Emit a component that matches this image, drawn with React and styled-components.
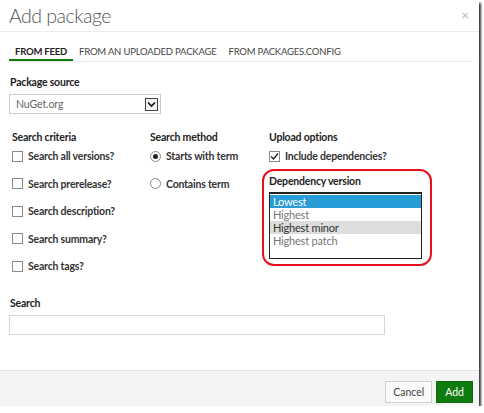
import React, { useState } from "react";
import styled, { createGlobalStyle } from "styled-components";

const GlobalStyle = createGlobalStyle`
  html, body {
    margin: 0;
    padding: 0;
    background: #ffffff;
  }
  body {
    font-family: Lato, "Open Sans", sans-serif;
    color: #333;
  }
`;

const Dialog = styled.div`
  width: 479px;
  height: 406px;
  background: #fff;
  display: flex;
  flex-direction: column;
  box-shadow: 2px 3px 2px #3a3a3a;
  box-sizing: border-box;
`;

const Header = styled.div`
  height: 32px;
  box-sizing: border-box;
  border-bottom: 1px solid #ececec;
  display: flex;
  align-items: center;
  justify-content: space-between;
  padding: 0 10px 0 9px;
`;

const Title = styled.div`
  font-size: 19.5px;
  font-weight: 300;
  letter-spacing: -0.5px;
  color: #555;
`;

const Close = styled.div`
  font-size: 14px;
  color: #bbb;
  margin-top: -3px;
  cursor: pointer;
`;

const Body = styled.div`
  flex: 1;
  padding: 0 6px 0 9px;
`;

const Tabs = styled.div`
  display: flex;
  margin-top: 10px;
  height: 19px;
  border-bottom: 1px solid #e6e6e6;
`;

const Tab = styled.div`
  padding: 4px 6px 0;
  font-size: 9.5px;
  letter-spacing: -0.2px;
  line-height: 12px;
  color: ${({ active }) => (active ? "#222" : "#444")};
  font-weight: ${({ active }) => (active ? 700 : 400)};
  border-bottom: 2px solid ${({ active }) => (active ? "#107c10" : "transparent")};
  cursor: pointer;
  white-space: nowrap;
`;

const Field = styled.div`
  margin-top: 13px;
`;

const Label = styled.div`
  font-size: 10.5px;
  letter-spacing: -0.2px;
  font-weight: 700;
  color: #222;
  height: 14px;
  line-height: 14px;
  padding-left: ${({ indent }) => indent || 0}px;
`;

const SelectBox = styled.div`
  margin-top: 5px;
  width: 152px;
  height: 20px;
  box-sizing: border-box;
  border: 1px solid #ccc;
  display: flex;
  align-items: center;
  justify-content: space-between;
  padding: 0 2px 0 6px;
  font-size: 10.5px;
  letter-spacing: -0.1px;
  color: #666;
`;

const Arrow = styled.div`
  width: 13px;
  height: 13px;
  box-sizing: border-box;
  border: 1px solid #444;
  background: #f2f2f2;
  display: flex;
  align-items: center;
  justify-content: center;
`;

const Columns = styled.div`
  display: grid;
  grid-template-columns: 138px 119px 1fr;
  margin-top: 16px;
  padding-left: 3px;
`;

const Column = styled.div`
  display: flex;
  flex-direction: column;
`;

const Option = styled.label`
  display: flex;
  align-items: center;
  gap: 5px;
  height: 14px;
  margin-top: ${({ first }) => (first ? 5 : 13.5)}px;
  font-size: 10.5px;
  letter-spacing: -0.2px;
  font-weight: 700;
  color: #333;
  cursor: pointer;
`;

const Box = styled.span`
  width: 9px;
  height: 9px;
  border: 1px solid #8a8a8a;
  background: #fff;
  display: inline-flex;
  align-items: center;
  justify-content: center;
  flex-shrink: 0;
`;

const Radio = styled.span`
  width: 9px;
  height: 9px;
  border: 1px solid #8a8a8a;
  border-radius: 50%;
  display: inline-flex;
  align-items: center;
  justify-content: center;
  flex-shrink: 0;
  &::after {
    content: "";
    width: 5px;
    height: 5px;
    border-radius: 50%;
    background: ${({ on }) => (on ? "#222" : "transparent")};
  }
`;

const Highlight = styled.div`
  margin: 6px 0 0 -7px;
  width: 170px;
  height: 97px;
  box-sizing: border-box;
  border: 2px solid #e8101a;
  border-radius: 12px;
  padding: 3px 0 0 5px;
`;

const ListBox = styled.div`
  margin-top: 4px;
  width: 153px;
  height: 67px;
  box-sizing: border-box;
  border: 1px solid #222;
  border-top-width: 2px;
  display: flex;
  flex-direction: column;
  padding-top: 1px;
`;

const ListItem = styled.div`
  height: 13px;
  line-height: 13px;
  padding-left: 3px;
  font-size: 11px;
  letter-spacing: -0.2px;
  background: ${({ selected, hover }) => (selected ? "#289cd6" : hover ? "#dddddd" : "transparent")};
  color: ${({ selected, hover }) => (selected ? "#fff" : hover ? "#333" : "#777")};
`;

const SearchField = styled.div`
  margin-top: 23px;
`;

const SearchInput = styled.input`
  display: block;
  margin-top: 5px;
  width: 376px;
  height: 20px;
  box-sizing: border-box;
  border: 1px solid #d6d6d6;
  outline: none;
  font-size: 11px;
  font-family: inherit;
`;

const Footer = styled.div`
  height: 36px;
  box-sizing: border-box;
  background: #f4f4f4;
  border-top: 1px solid #e4e4e4;
  display: flex;
  justify-content: flex-end;
  align-items: center;
  gap: 4px;
  padding: 7px 6px 0 0;
`;

const Button = styled.button`
  height: 22px;
  padding: 0 ${({ primary }) => (primary ? 8 : 7)}px;
  font-family: inherit;
  font-size: 10.5px;
  border: 1px solid ${({ primary }) => (primary ? "#0e6b0e" : "#cfcfcf")};
  background: ${({ primary }) => (primary ? "#107c10" : "#fafafa")};
  color: ${({ primary }) => (primary ? "#fff" : "#444")};
  cursor: pointer;
`;

const criteria = [
  "Search all versions?",
  "Search prerelease?",
  "Search description?",
  "Search summary?",
  "Search tags?",
];

const versions = ["Lowest", "Highest", "Highest minor", "Highest patch"];

const Check = () => (
  <svg width="9" height="9" viewBox="0 0 9 9">
    <path d="M1 4.5 L3.5 7 L8 1.5" fill="none" stroke="#222" strokeWidth="1.4" />
  </svg>
);

export default function App() {
  const [tab, setTab] = useState("feed");
  const [method, setMethod] = useState("starts");

  return (
    <>
      <GlobalStyle />
      <Dialog>
        <Header>
          <Title>Add package</Title>
          <Close>×</Close>
        </Header>
        <Body>
          <Tabs>
            <Tab active={tab === "feed"} onClick={() => setTab("feed")}>FROM FEED</Tab>
            <Tab active={tab === "upload"} onClick={() => setTab("upload")}>FROM AN UPLOADED PACKAGE</Tab>
            <Tab active={tab === "config"} onClick={() => setTab("config")}>FROM PACKAGES.CONFIG</Tab>
          </Tabs>

          <Field>
            <Label indent={1}>Package source</Label>
            <SelectBox>
              NuGet.org
              <Arrow>
                <svg width="9" height="7" viewBox="0 0 9 7">
                  <path d="M1 1.5 L4.5 5 L8 1.5" fill="none" stroke="#111" strokeWidth="1.6" />
                </svg>
              </Arrow>
            </SelectBox>
          </Field>

          <Columns>
            <Column>
              <Label>Search criteria</Label>
              {criteria.map((c, i) => (
                <Option key={c} first={i === 0}>
                  <Box />
                  {c}
                </Option>
              ))}
            </Column>
            <Column>
              <Label>Search method</Label>
              <Option first onClick={() => setMethod("starts")}>
                <Radio on={method === "starts"} />
                Starts with term
              </Option>
              <Option onClick={() => setMethod("contains")}>
                <Radio on={method === "contains"} />
                Contains term
              </Option>
            </Column>
            <Column>
              <Label>Upload options</Label>
              <Option first>
                <Box>
                  <Check />
                </Box>
                Include dependencies?
              </Option>
              <Highlight>
                <Label>Dependency version</Label>
                <ListBox>
                  {versions.map((v, i) => (
                    <ListItem key={v} selected={i === 0} hover={i === 2}>
                      {v}
                    </ListItem>
                  ))}
                </ListBox>
              </Highlight>
            </Column>
          </Columns>

          <SearchField>
            <Label indent={1}>Search</Label>
            <SearchInput />
          </SearchField>
        </Body>
        <Footer>
          <Button>Cancel</Button>
          <Button primary>Add</Button>
        </Footer>
      </Dialog>
    </>
  );
}
